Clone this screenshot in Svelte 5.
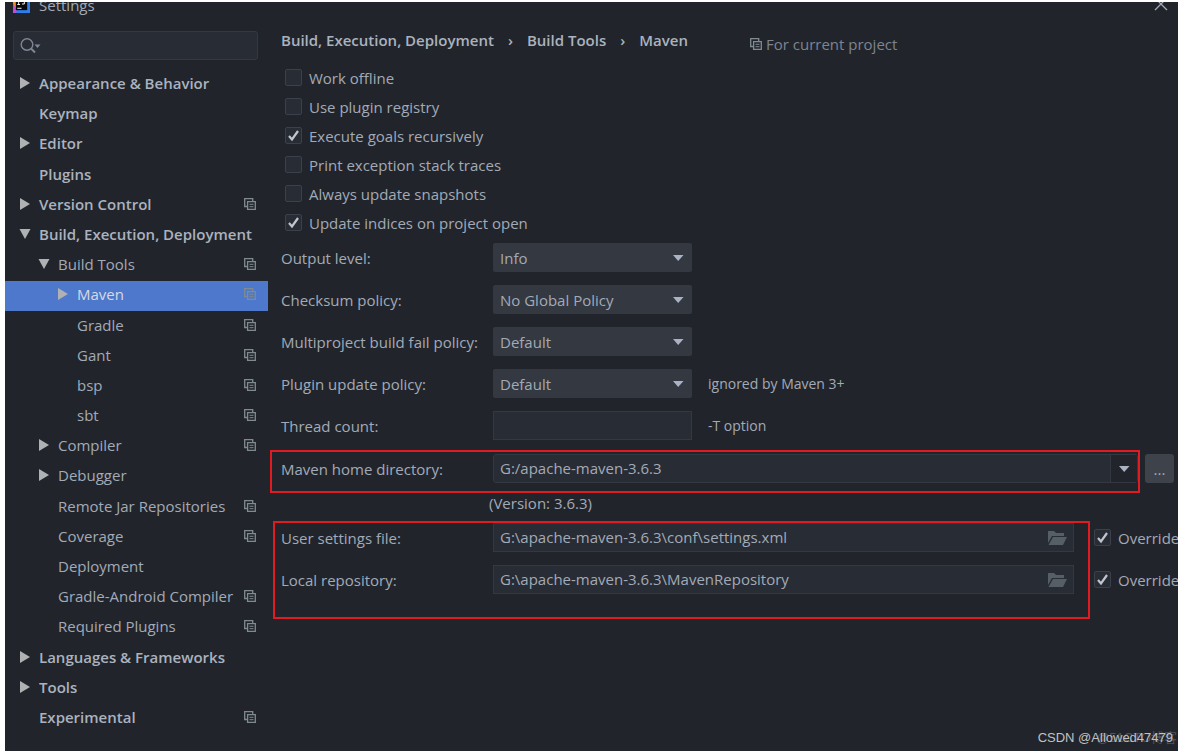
<script lang="ts">
  interface TreeItem {
    label: string;
    level: number;
    state?: 'open' | 'closed';
    project?: boolean;
  }

  const tree: TreeItem[] = [
    { label: 'Appearance & Behavior', level: 0, state: 'closed' },
    { label: 'Keymap', level: 0 },
    { label: 'Editor', level: 0, state: 'closed' },
    { label: 'Plugins', level: 0 },
    { label: 'Version Control', level: 0, state: 'closed', project: true },
    { label: 'Build, Execution, Deployment', level: 0, state: 'open' },
    { label: 'Build Tools', level: 1, state: 'open', project: true },
    { label: 'Maven', level: 2, state: 'closed', project: true },
    { label: 'Gradle', level: 2, project: true },
    { label: 'Gant', level: 2, project: true },
    { label: 'bsp', level: 2, project: true },
    { label: 'sbt', level: 2, project: true },
    { label: 'Compiler', level: 1, state: 'closed', project: true },
    { label: 'Debugger', level: 1, state: 'closed' },
    { label: 'Remote Jar Repositories', level: 1, project: true },
    { label: 'Coverage', level: 1, project: true },
    { label: 'Deployment', level: 1 },
    { label: 'Gradle-Android Compiler', level: 1, project: true },
    { label: 'Required Plugins', level: 1, project: true },
    { label: 'Languages & Frameworks', level: 0, state: 'closed' },
    { label: 'Tools', level: 0, state: 'closed' },
    { label: 'Experimental', level: 0, project: true }
  ];

  let selected = $state('Maven');

  let options = $state([
    { label: 'Work offline', checked: false },
    { label: 'Use plugin registry', checked: false },
    { label: 'Execute goals recursively', checked: true },
    { label: 'Print exception stack traces', checked: false },
    { label: 'Always update snapshots', checked: false },
    { label: 'Update indices on project open', checked: true }
  ]);

  const policies = [
    { id: 'output', label: 'Output level:', values: ['Info', 'Debug', 'Warn', 'Error'] },
    { id: 'checksum', label: 'Checksum policy:', values: ['No Global Policy', 'Fail', 'Warn'] },
    { id: 'failure', label: 'Multiproject build fail policy:', values: ['Default', 'Fail Fast', 'Never Fail'] },
    { id: 'update', label: 'Plugin update policy:', values: ['Default', 'Update'], hint: 'ignored by Maven 3+' }
  ];

  let paths = $state([
    { id: 'settings', label: 'User settings file:', value: 'G:\\apache-maven-3.6.3\\conf\\settings.xml', override: true },
    { id: 'repository', label: 'Local repository:', value: 'G:\\apache-maven-3.6.3\\MavenRepository', override: true }
  ]);

  let threads = $state('');
  let home = $state('G:/apache-maven-3.6.3');
  let query = $state('');
</script>

{#snippet projectIcon()}
  <svg class="project-icon" viewBox="0 0 12 12" fill="none" stroke="currentColor" aria-hidden="true">
    <path d="M3 8.500H.7V.7h8V3" stroke-width="1.300" />
    <path d="M3.600 3.600h7.700v7.700H3.600z" stroke-width="1.300" />
    <path d="M5.500 6.300h4M5.500 8.700h4" />
  </svg>
{/snippet}

{#snippet downArrow()}
  <svg class="down" viewBox="0 0 12 8" fill="currentColor" aria-hidden="true"><path d="M1 1h10.500L6.200 7z" /></svg>
{/snippet}

<div class="page">
  <div class="dialog">
    <header class="titlebar">
      <svg class="logo" viewBox="0 0 18 18" aria-hidden="true">
        <path d="M0 0h9v18H0z" fill="#f58a3c" />
        <path d="M0 8l6 10H0z" fill="#c04fd0" />
        <path d="M9 0h9v18H3z" fill="#2d7ff0" />
        <path d="M3 3h12v12H3z" fill="#080808" />
        <path d="M4.500 5h3M6 5v4M4.500 9h3M9 5h3v3.500H9.500M4.500 13h4.500" stroke="#fff" fill="none" />
      </svg>
      <span class="title">Settings</span>
      <button class="close" aria-label="Close">
        <svg viewBox="0 0 14 14" stroke="currentColor" stroke-width="1.300" fill="none"><path d="M1 1l12 12M13 1L1 13" /></svg>
      </button>
    </header>

    <div class="body">
      <nav class="sidebar">
        <label class="search">
          <svg viewBox="0 0 22 18" fill="none" stroke="currentColor" stroke-width="1.400" aria-hidden="true">
            <circle cx="7" cy="7.500" r="5.800" />
            <path d="M11 11.500l4 4" stroke-width="2" />
            <path d="M14.500 7.500h6l-3 3.500z" fill="currentColor" stroke="none" />
          </svg>
          <input type="text" aria-label="Search settings" bind:value={query} />
        </label>

        <ul class="tree">
          {#each tree as item}
            <li>
              <button
                class="node level-{item.level}"
                class:selected={item.label === selected}
                onclick={() => (selected = item.label)}
              >
                <span class="toggle">
                  {#if item.state === 'closed'}
                    <svg viewBox="0 0 12 12" fill="currentColor"><path d="M1 0l10 6-10 6z" /></svg>
                  {:else if item.state === 'open'}
                    <svg viewBox="0 0 12 12" fill="currentColor"><path d="M0.500 1h11L6 11z" /></svg>
                  {/if}
                </span>
                <span class="name">{item.label}</span>
                {#if item.project}{@render projectIcon()}{/if}
              </button>
            </li>
          {/each}
        </ul>
      </nav>

      <main class="content">
        <div class="heading">
          <h1 class="crumbs">
            <span>Build, Execution, Deployment</span>
            <span class="sep">›</span>
            <span>Build Tools</span>
            <span class="sep">›</span>
            <span>Maven</span>
          </h1>
          <span class="scope">{@render projectIcon()} For current project</span>
        </div>

        <div class="options">
          {#each options as option}
            <label class="check">
              <input type="checkbox" bind:checked={option.checked} />
              <span>{option.label}</span>
            </label>
          {/each}
        </div>

        <div class="form">
          {#each policies as policy}
            <div class="row">
              <label class="caption" for={policy.id}>{policy.label}</label>
              <div class="select">
                <select id={policy.id}>
                  {#each policy.values as value}<option>{value}</option>{/each}
                </select>
                {@render downArrow()}
              </div>
              {#if policy.hint}<span class="hint">{policy.hint}</span>{/if}
            </div>
          {/each}
          <div class="row">
            <label class="caption" for="threads">Thread count:</label>
            <input id="threads" class="field short" type="text" bind:value={threads} />
            <span class="hint">-T option</span>
          </div>
        </div>

        <div class="home">
          <div class="row">
            <label class="caption" for="home">Maven home directory:</label>
            <div class="combo">
              <input id="home" type="text" bind:value={home} />
              <button aria-label="Show versions">{@render downArrow()}</button>
            </div>
            <button class="browse" aria-label="Browse">...</button>
          </div>
          <div class="mark mark-home"></div>
        </div>

        <p class="version">(Version: 3.6.3)</p>

        <div class="paths">
          {#each paths as path}
            <div class="row">
              <label class="caption" for={path.id}>{path.label}</label>
              <div class="file">
                <input id={path.id} type="text" bind:value={path.value} />
                <button aria-label="Choose path">
                  <svg viewBox="0 0 19 14" fill="currentColor" aria-hidden="true">
                    <path d="M0 0h6l2 2h8v3H4L0 12z" />
                    <path d="M5 6h14l-4 8H0.500z" />
                  </svg>
                </button>
              </div>
              <label class="check override">
                <input type="checkbox" bind:checked={path.override} />
                <span>Override</span>
              </label>
            </div>
          {/each}
          <div class="mark mark-paths"></div>
        </div>
      </main>
    </div>

    <span class="watermark faint">@51CTO博客</span>
    <span class="watermark">CSDN @Allowed47479</span>
  </div>
</div>

<style>
  :global(body) {
    margin: 0;
    background: #fff;
  }

  .page {
    --bg: #21252b;
    --field: #282c34;
    --line: #333841;
    --text: #a3aab7;
    --bright: #abb2bf;
    box-sizing: border-box;
    min-height: 100vh;
    padding: 2px 6px 0 5px;
    display: flex;
    font-family: 'Open Sans', 'Noto Sans', sans-serif;
    font-size: 15px;
    line-height: 20px;
    color: var(--text);
  }

  .dialog {
    position: relative;
    flex: 1;
    min-width: 0;
    display: flex;
    flex-direction: column;
    background: var(--bg);
    overflow: hidden;
  }

  button,
  input,
  select {
    box-sizing: border-box;
    margin: 0;
    padding: 0;
    border: 0;
    border-radius: 0;
    background: none;
    color: inherit;
    font: inherit;
    outline: none;
  }

  svg {
    display: block;
    flex: none;
  }

  .titlebar {
    height: 14px;
    padding: 0 10px 0 8px;
    display: flex;
    align-items: flex-end;
    gap: 9px;
    overflow: hidden;
  }

  .logo {
    width: 17px;
    height: 17px;
    margin-bottom: 3px;
  }

  .title {
    flex: 1;
    line-height: 22px;
  }

  .close {
    padding-bottom: 5px;
  }

  .close svg {
    width: 14px;
    height: 14px;
  }

  .body {
    flex: 1;
    display: flex;
  }

  .sidebar {
    width: 263px;
    flex: none;
    padding: 15px 0 17px;
    display: flex;
    flex-direction: column;
    gap: 10px;
  }

  .search {
    box-sizing: border-box;
    height: 29px;
    margin: 0 10px 0 8px;
    padding: 0 6px;
    display: flex;
    align-items: center;
    gap: 4px;
    background: var(--field);
    border: 1px solid var(--line);
    border-radius: 3px;
    color: #7f8794;
  }

  .search svg {
    width: 22px;
    height: 18px;
  }

  .search input {
    flex: 1;
    min-width: 0;
  }

  .tree {
    flex: 1;
    margin: 0;
    padding: 0;
    list-style: none;
    display: grid;
    grid-auto-rows: minmax(30px, 1fr);
  }

  .node {
    width: 100%;
    height: 100%;
    padding: 0 12px 4px 0;
    display: flex;
    align-items: center;
    text-align: left;
    white-space: nowrap;
  }

  .level-0 {
    padding-left: 14px;
    font-weight: 600;
    color: var(--bright);
  }

  .level-1 {
    padding-left: 33px;
  }

  .level-2 {
    padding-left: 52px;
  }

  .node.selected {
    background: #4d78cc;
    color: #d7dae0;
  }

  .toggle {
    width: 20px;
    flex: none;
    color: #afb1b3;
  }

  .toggle svg {
    width: 12px;
    height: 12px;
  }

  .name {
    flex: 1;
  }

  .project-icon {
    width: 12px;
    height: 12px;
    color: #7f8b91;
  }

  .content {
    flex: 1;
    min-width: 0;
    padding: 14px 0 0 13px;
  }

  .heading {
    display: flex;
    align-items: flex-start;
    gap: 62px;
    height: 33px;
    white-space: nowrap;
  }

  .crumbs {
    margin: 0;
    display: flex;
    gap: 14px;
    font-size: 15px;
    font-weight: 600;
    color: var(--bright);
  }

  .scope {
    padding-top: 4px;
    display: flex;
    align-items: center;
    gap: 4px;
    color: #7d8490;
  }

  .options {
    padding-left: 4px;
  }

  .check {
    height: 29px;
    display: flex;
    align-items: center;
    gap: 7px;
    white-space: nowrap;
  }

  .check input {
    appearance: none;
    width: 17px;
    height: 17px;
    flex: none;
    background: var(--field) center / 13px 13px no-repeat;
    border: 1px solid #3b404a;
    border-radius: 2px;
  }

  .check input:checked {
    background-image: url("data:image/svg+xml,%3Csvg xmlns='http://www.w3.org/2000/svg' viewBox='0 0 13 13'%3E%3Cpath d='M2 7l3 3.500L11 2' fill='none' stroke='%23c0c5d0' stroke-width='2.200'/%3E%3C/svg%3E");
  }

  .form,
  .paths {
    display: grid;
    gap: 13px;
  }

  .form {
    padding-top: 6px;
  }

  .row {
    height: 29px;
    display: flex;
    align-items: center;
    white-space: nowrap;
  }

  .caption {
    width: 212px;
    flex: none;
  }

  .select {
    width: 199px;
    display: grid;
    align-items: center;
  }

  .select select,
  .select .down {
    grid-area: 1 / 1;
  }

  .select select {
    appearance: none;
    height: 29px;
    padding: 0 24px 0 7px;
    background: var(--line);
    border-radius: 2px;
  }

  .down {
    width: 12px;
    height: 8px;
    color: #abb2c4;
    pointer-events: none;
  }

  .select .down {
    justify-self: end;
    margin-right: 8px;
  }

  .field,
  .combo,
  .file {
    box-sizing: border-box;
    height: 29px;
    background: var(--field);
    border: 1px solid var(--line);
  }

  .short {
    width: 199px;
    padding: 0 6px;
  }

  .hint {
    margin-left: 16px;
    font-size: 14px;
  }

  .home,
  .paths {
    position: relative;
  }

  .home {
    padding-top: 14px;
  }

  .combo,
  .file {
    flex: 1;
    min-width: 0;
    display: flex;
  }

  .combo {
    border-radius: 3px;
  }

  .combo input,
  .file input {
    flex: 1;
    min-width: 0;
    padding: 0 6px 2px;
  }

  .combo button {
    width: 27px;
    display: grid;
    place-items: center;
    background: var(--bg);
    border-left: 1px solid var(--line);
  }

  .file button {
    width: 32px;
    display: grid;
    place-items: center;
    color: #565f66;
  }

  .file svg {
    width: 19px;
    height: 14px;
  }

  .browse {
    width: 29px;
    height: 29px;
    margin: 0 4px 0 7px;
    background: #3d424b;
    border-radius: 3px;
  }

  .version {
    height: 40px;
    margin: 0 0 0 208px;
    line-height: 40px;
  }

  .override {
    width: 84px;
    margin-left: 20px;
    flex: none;
  }

  /* Red frames around the fields that have to be changed */
  .mark {
    position: absolute;
    border: 2px solid #e01b22;
    pointer-events: none;
  }

  .mark-home {
    inset: 10px 38px -10px -11px;
  }

  .mark-paths {
    inset: -2px 88px -25px -8px;
  }

  .watermark {
    position: absolute;
    right: 5px;
    bottom: 3px;
    font-family: 'Liberation Sans', 'Noto Sans CJK SC', sans-serif;
    font-size: 13px;
    color: #c0c2c6;
  }

  .faint {
    right: 1px;
    color: #50545a;
  }
</style>
